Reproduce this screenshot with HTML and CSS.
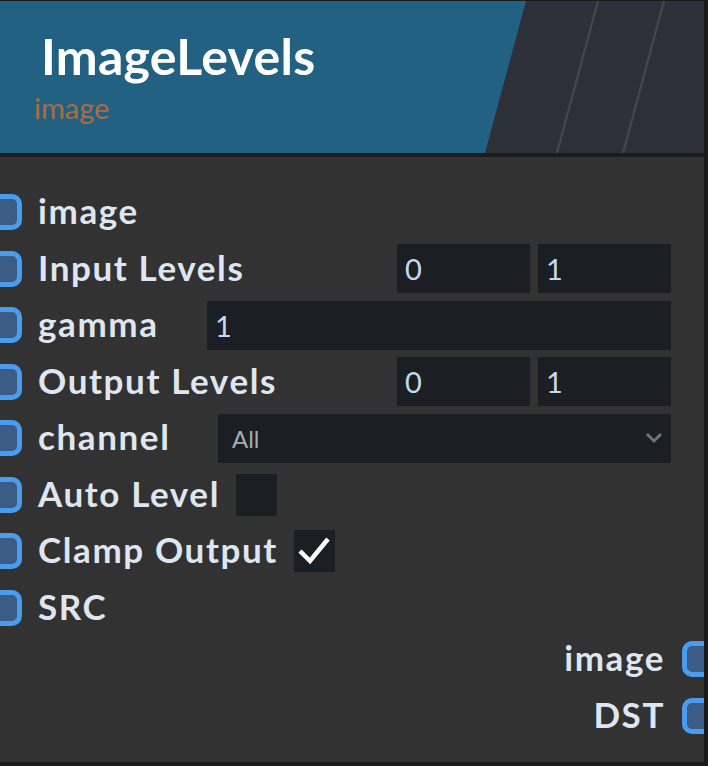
FILE: index.html
```html
<!DOCTYPE html>
<html>
<head>
<meta charset="utf-8">
<link rel="stylesheet" href="styles.css">
</head>
<body>
<div class="node">
  <div class="header">
    <svg class="deco" width="704" height="152" viewBox="0 0 704 152">
      <polygon points="526,0 704,0 704,152 485,152" fill="#2e3039"/>
      <line x1="598" y1="0" x2="557" y2="152" stroke="#46474b" stroke-width="2.2"/>
      <line x1="664" y1="0" x2="623" y2="152" stroke="#46474b" stroke-width="2.2"/>
    </svg>
    <div class="title">ImageLevels</div>
    <div class="subtitle">image</div>
  </div>
  <div class="sep"></div>
  <div class="body">
    <div class="row"><span class="socket in"></span><span class="label">image</span></div>
    <div class="row"><span class="socket in"></span><span class="label">Input Levels</span>
      <div class="pair"><div class="field">0</div><div class="field">1</div></div></div>
    <div class="row"><span class="socket in"></span><span class="label">gamma</span>
      <div class="field wide">1</div></div>
    <div class="row"><span class="socket in"></span><span class="label">Output Levels</span>
      <div class="pair"><div class="field">0</div><div class="field">1</div></div></div>
    <div class="row"><span class="socket in"></span><span class="label">channel</span>
      <div class="select"><span>All</span>
        <svg class="chev" width="18" height="12" viewBox="0 0 18 12"><polyline points="2,2 9,9 16,2" fill="none" stroke="#6b7480" stroke-width="3"/></svg>
      </div></div>
    <div class="row"><span class="socket in"></span><span class="label">Auto Level</span><span class="check"></span></div>
    <div class="row"><span class="socket in"></span><span class="label">Clamp Output</span>
      <span class="check"><svg width="41" height="42" viewBox="0 0 41 42"><polyline points="6,21 16,31 34,9" fill="none" stroke="#ffffff" stroke-width="4.5" stroke-linejoin="miter"/></svg></span></div>
    <div class="row"><span class="socket in"></span><span class="label">SRC</span></div>
    <div class="outputs">
      <div class="row out"><span class="label">image</span><span class="socket outs"></span></div>
      <div class="row out"><span class="label">DST</span><span class="socket outs"></span></div>
    </div>
  </div>
</div>
</body>
</html>
```
FILE: styles.css
```css
html, body {
  margin: 0;
  padding: 0;
  background: #1a1a1a;
  width: 708px;
  height: 766px;
  overflow: hidden;
}
.node {
  margin-top: 1px;
  width: 704px;
  height: 761px;
  background: #323232;
  overflow: hidden;
  display: flex;
  flex-direction: column;
  font-family: "Lato", "Liberation Sans", sans-serif;
}
.header {
  position: relative;
  height: 152px;
  background: #236183;
  box-sizing: border-box;
  padding-left: 41px;
  padding-top: 25px;
}
.deco {
  position: absolute;
  left: 0;
  top: 0;
}
.title {
  position: relative;
  font-size: 50px;
  font-weight: 700;
  color: #ffffff;
  line-height: 60px;
  letter-spacing: 0.3px;
}
.subtitle {
  position: relative;
  margin-left: -7px;
  margin-top: 5px;
  font-size: 29px;
  color: #ad6c3f;
  line-height: 34px;
}
.sep {
  height: 4px;
  background: #1c1c1c;
}
.body {
  flex: 1;
  padding-top: 27px;
  padding-right: 33px;
  display: flex;
  flex-direction: column;
}
.row {
  height: 56.5px;
  display: flex;
  align-items: center;
  flex-shrink: 0;
}
.socket {
  width: 36px;
  height: 36px;
  box-sizing: border-box;
  border: 5px solid #4a9cef;
  background: #3b5d85;
  border-radius: 10px;
  flex-shrink: 0;
}
.socket.in {
  margin-left: -14px;
  margin-right: 16px;
}
.label {
  font-size: 35px;
  font-weight: 700;
  color: #dfe6ef;
  letter-spacing: 1.6px;
  white-space: nowrap;
  padding-bottom: 4px;
}
.pair {
  margin-left: auto;
  display: flex;
  gap: 8px;
}
.field {
  width: 133px;
  height: 49px;
  box-sizing: border-box;
  background: #1b1e22;
  color: #c6d8ee;
  font-family: "Lato", "Liberation Sans", sans-serif;
  font-size: 29px;
  line-height: 49px;
  padding-left: 8px;
}
.field.wide {
  margin-left: auto;
  width: 464px;
}
.select {
  margin-left: auto;
  width: 453px;
  height: 49px;
  box-sizing: border-box;
  background: #1b1e22;
  display: flex;
  align-items: center;
  justify-content: space-between;
  padding-left: 14px;
  padding-right: 8px;
  color: #a4acb6;
  font-size: 24px;
}
.check {
  margin-left: 16px;
  width: 41px;
  height: 42px;
  background: #1b1e22;
  display: block;
}
.check svg {
  display: block;
}
.outputs {
  margin-top: -5px;
  display: flex;
  flex-direction: column;
}
.row.out {
  justify-content: flex-end;
  margin-right: -33px;
}
.socket.outs {
  margin-left: 17px;
  margin-right: -14px;
}
```
